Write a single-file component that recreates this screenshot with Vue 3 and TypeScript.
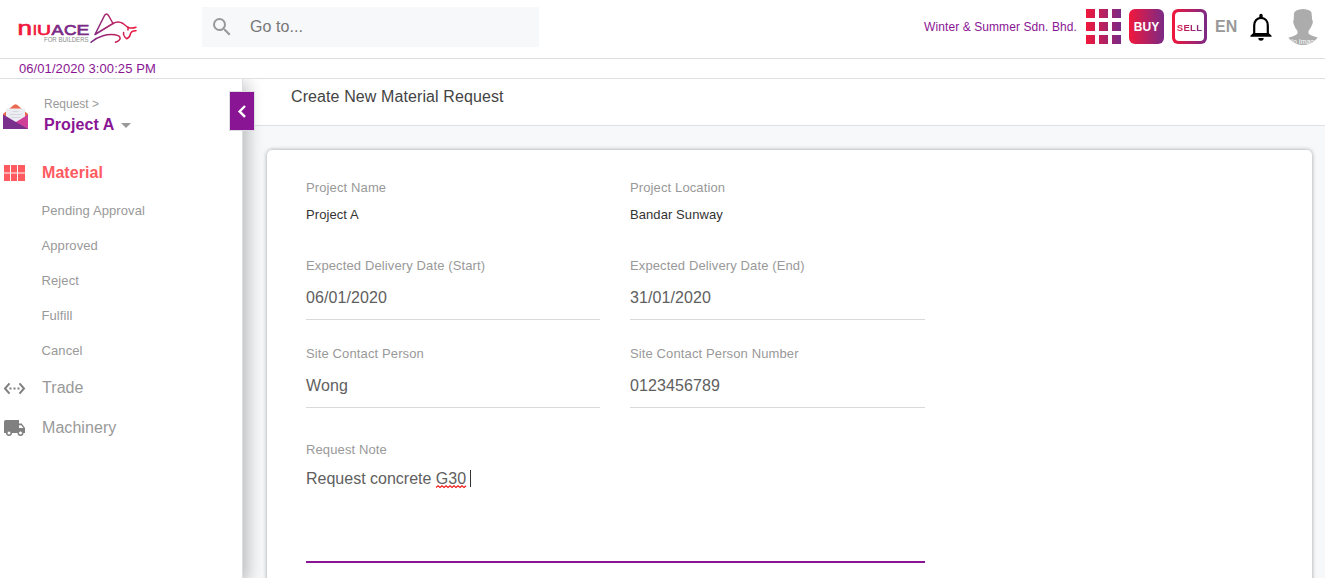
<script setup lang="ts">
import { ref } from 'vue'

interface Field {
  label: string
  value: string
  kind: 'static' | 'input'
}

const materialLinks: string[] = ['Pending Approval', 'Approved', 'Reject', 'Fulfill', 'Cancel']

const rows = ref<Field[][]>([
  [
    { label: 'Project Name', value: 'Project A', kind: 'static' },
    { label: 'Project Location', value: 'Bandar Sunway', kind: 'static' },
  ],
  [
    { label: 'Expected Delivery Date (Start)', value: '06/01/2020', kind: 'input' },
    { label: 'Expected Delivery Date (End)', value: '31/01/2020', kind: 'input' },
  ],
  [
    { label: 'Site Contact Person', value: 'Wong', kind: 'input' },
    { label: 'Site Contact Person Number', value: '0123456789', kind: 'input' },
  ],
])
</script>

<template>
  <div class="page">
    <header class="topbar">
      <svg class="logo" width="124" height="36" viewBox="0 0 124 36">
        <defs>
          <linearGradient id="bull" gradientUnits="userSpaceOnUse" x1="75" y1="0" x2="120" y2="0">
            <stop offset="0" stop-color="#7b2a86" />
            <stop offset="1" stop-color="#f0183c" />
          </linearGradient>
        </defs>
        <g class="wordmark">
          <text class="red small-n" x="1.6" y="25.4" textLength="14.5" lengthAdjust="spacingAndGlyphs">n</text>
          <text class="red" x="16.800" y="25.4">I</text>
          <text class="red" x="21" y="25.4" textLength="14" lengthAdjust="spacingAndGlyphs">U</text>
          <text class="purple" x="35.6" y="25.4" textLength="12" lengthAdjust="spacingAndGlyphs">A</text>
          <text class="purple" x="48" y="25.4" textLength="12.500" lengthAdjust="spacingAndGlyphs">C</text>
          <text class="purple" x="60.400" y="25.4" textLength="12.8" lengthAdjust="spacingAndGlyphs">E</text>
        </g>
        <text class="tagline" x="28" y="31.8" textLength="44.5" lengthAdjust="spacingAndGlyphs">FOR BUILDERS</text>
        <g fill="none" stroke="url(#bull)" stroke-width="1.5" stroke-linejoin="round" stroke-linecap="round">
          <path d="M79 24.5 L88.5 5.5 Q90.5 2.5 92.5 5.5 L97 13.5 L79 24.5Z" />
          <path d="M97 13.5 Q102 10.500 107 13.5 L112 17.500 Q116 18.8 120 17.2 M120 20.800 Q116 20.5 114.5 23.5 Q114 27.5 110.8 28.8 Q107 26 107.6 22.5" />
          <path d="M112 17 L112 20" />
          <path d="M75 32.3 C82 26 92 23.5 99 24.8 C106 26.2 105.5 30 99.5 32.2" />
        </g>
      </svg>
      <div class="search">
        <svg width="24" height="24" viewBox="0 0 24 24">
          <path fill="#999" d="M15.5 14h-.79l-.28-.27A6.47 6.47 0 0 0 16 9.5 6.5 6.5 0 1 0 9.500 16c1.610 0 3.090-.59 4.230-1.570l.27.28v.79l5 4.990L20.490 19l-4.990-5zm-6 0C7.010 14 5 11.990 5 9.500S7.010 5 9.500 5 14 7.010 14 9.500 11.990 14 9.500 14z" />
        </svg>
        <span>Go to...</span>
      </div>
      <div class="actions">
        <span class="company">Winter &amp; Summer Sdn. Bhd.</span>
        <svg class="apps" width="35" height="35" viewBox="0 0 35 35">
          <defs>
            <linearGradient id="brand" gradientUnits="userSpaceOnUse" x1="0" y1="0" x2="35" y2="0">
              <stop offset="0" stop-color="#f2173b" />
              <stop offset="1" stop-color="#7b2a86" />
            </linearGradient>
          </defs>
          <path fill="url(#brand)" d="M0 0h9v9H0zM13 0h9v9h-9zM26 0h9v9h-9zM0 13h9v9H0zM13 13h9v9h-9zM26 13h9v9h-9zM0 26h9v9H0zM13 26h9v9h-9zM26 26h9v9h-9z" />
        </svg>
        <span class="buy">BUY</span>
        <span class="sell"><span class="sell-inner"><span class="sell-text">SELL</span></span></span>
        <span class="lang">EN</span>
        <svg class="bell" width="24" height="28" viewBox="0 0 24 28">
          <path fill="none" stroke="#000" stroke-width="2.200" d="M5.200 22V12.500C5.200 8 8 4.800 12 4.800S18.800 8 18.800 12.500V22" />
          <path d="M10.300 2.500a1.700 1.700 0 0 1 3.400 0V5h-3.400zM1.400 22.800 4.300 20h15.400l2.900 2.800v1H1.400zM9.300 25h5.400a2.700 2.700 0 0 1-5.400 0z" />
        </svg>
        <svg class="avatar" width="36" height="36" viewBox="0 0 36 36">
          <defs>
            <clipPath id="round"><circle cx="18" cy="18" r="18" /></clipPath>
          </defs>
          <g clip-path="url(#round)">
            <path fill="#acacac" d="M9 4Q11 0 18 0Q25 0 26.500 3.500L27.200 11Q28.500 12 27.200 15.500Q25.500 20 23.500 22V24.500Q24.500 26.500 36 29.500V36H0V29.500Q11 27 12.500 24.500V22Q9.800 19 8.700 15Q7.500 12 8.700 11Z" />
            <text x="3" y="35" textLength="30" lengthAdjust="spacingAndGlyphs">No Image</text>
          </g>
        </svg>
      </div>
    </header>

    <div class="clock">06/01/2020 3:00:25 PM</div>

    <div class="body">
      <aside class="sidebar">
        <button class="collapse" aria-label="Collapse menu">
          <svg width="24" height="38" viewBox="0 0 24 38">
            <path fill="none" stroke="#fff" stroke-width="2.400" d="M15 14 9.600 19.400 15 24.800" />
          </svg>
        </button>
        <div class="project">
          <svg class="mail" width="26" height="26" viewBox="0 0 26 26">
            <path fill="#e96a50" d="M0 10 11 .8Q12.500-.3 14 .8L25 10v5H0z" />
            <path fill="#cf3f98" d="M25 10.500V25H0z" />
            <path fill="#ecedf2" d="M3 4.500h19v8L12.500 18.300 3 12.500z" />
            <path stroke="#d5d7df" d="M9.500 7.500h6M6.500 10.500h12M8 13.500h9" />
            <path fill="#7b2f8d" d="M0 10.500 25 25H0z" />
          </svg>
          <div>
            <div class="crumb">Request &gt;</div>
            <div class="project-name">Project A <i class="caret"></i></div>
          </div>
        </div>
        <nav>
          <div class="item active">
            <svg width="24" height="24" viewBox="0 0 24 24">
              <path fill="#ff5a5f" d="M2 4h6v7.500H2zM9 4h6v7.500H9zM16 4h7v7.500h-7zM2 12.500h6V20H2zM9 12.500h6V20H9zM16 12.500h7V20h-7z" />
            </svg>
            <span>Material</span>
          </div>
          <ul>
            <li v-for="link in materialLinks" :key="link">{{ link }}</li>
          </ul>
          <div class="item">
            <svg width="24" height="24" viewBox="0 0 24 24">
              <path fill="none" stroke="#808080" stroke-width="2" d="M7.500 7.300 3 12.500 7.500 17.700M17.500 7.300 22 12.500 17.500 17.700" />
              <path fill="#808080" d="M7.500 11.500h2v2h-2zM11.500 11.500h2v2h-2zM15.500 11.500h2v2h-2z" />
            </svg>
            <span>Trade</span>
          </div>
          <div class="item">
            <svg width="24" height="24" viewBox="0 0 24 24">
              <path fill="#808080" d="M19.700 7.500H17V4H3.800Q2 4 2 6V17h2a3 3 0 0 0 6 0h5.500a3 3 0 0 0 6 0H23V12zM19.200 9.200l2.200 2.800H17V9.200z" />
              <circle cx="7" cy="17" r="2" fill="#fff" stroke="#808080" />
              <circle cx="18.500" cy="17" r="2" fill="#fff" stroke="#808080" />
            </svg>
            <span>Machinery</span>
          </div>
        </nav>
      </aside>

      <main>
        <h1>Create New Material Request</h1>
        <section class="card">
          <div v-for="(row, i) in rows" :key="i" class="row" :class="row[0].kind">
            <div v-for="field in row" :key="field.label" class="field">
              <div class="label">{{ field.label }}</div>
              <div class="value">{{ field.value }}</div>
            </div>
          </div>
          <div class="note">
            <div class="label">Request Note</div>
            <div class="value">
              <span>Request concrete </span><span class="misspelt">G30<svg width="31" height="4" viewBox="0 0 31 4"><path fill="none" stroke="#f01818" stroke-width="1.200" d="M0 2.500 2 .8 4 2.500 6 .8 8 2.500 10 .8 12 2.500 14 .8 16 2.500 18 .8 20 2.500 22 .8 24 2.500 26 .8 28 2.500 30 .8" /></svg></span><i class="cursor"></i>
            </div>
          </div>
        </section>
      </main>
    </div>
  </div>
</template>

<style>
body {
  overflow: hidden;
}
</style>

<style scoped>
.page {
  width: 1325px;
  height: 578px;
  display: flex;
  flex-direction: column;
  overflow: hidden;
  background: #fff;
  color: #999;
  font-family: "Liberation Sans", Arial, sans-serif;
  font-size: 13px;
  white-space: nowrap;
}
.page * {
  box-sizing: border-box;
}
.page svg {
  display: block;
  flex: none;
}
.topbar {
  flex: none;
  height: 59px;
  border-bottom: 1px solid #dfe0e3;
  display: flex;
  align-items: flex-start;
}
.logo {
  margin: 10px 62px 0 16px;
}
.wordmark {
  font-size: 15.500px;
  stroke-width: 0.700px;
}
.small-n {
  font-size: 20px;
}
.red {
  fill: #f0183c;
  stroke: #f0183c;
}
.purple {
  fill: #7b2a86;
  stroke: #7b2a86;
}
.tagline {
  font-size: 6.300px;
  fill: #8c8c8c;
}
.search {
  margin-top: 7px;
  width: 337px;
  height: 40px;
  padding-left: 8px;
  background: #f6f8fa;
  display: flex;
  align-items: center;
  gap: 16px;
  font-size: 16px;
  letter-spacing: 0.060px;
  color: #777;
}
.actions {
  margin-left: auto;
  padding: 9px 4px 0 0;
  display: flex;
  align-items: flex-start;
}
.company {
  line-height: 36px;
  margin-right: 9px;
  font-size: 12px;
  letter-spacing: 0.090px;
  color: #8a1594;
}
.apps {
  margin-right: 8px;
}
.buy,
.sell {
  width: 35px;
  height: 35px;
  border-radius: 6px;
  background: linear-gradient(90deg, #f2173b, #7b2a86);
  font-weight: 700;
}
.buy {
  margin-right: 8px;
  color: #fff;
  font-size: 12px;
  line-height: 36px;
  text-align: center;
}
.sell {
  padding: 3px;
  margin-right: 8px;
}
.sell-inner {
  display: block;
  height: 29px;
  border-radius: 4px;
  background: #fff;
  text-align: center;
  line-height: 30px;
}
.sell-text {
  font-size: 9.500px;
  letter-spacing: 0.300px;
  color: transparent;
  background: linear-gradient(90deg, #e01c45, #7b2a86);
  background-clip: text;
}
.lang {
  width: 23px;
  margin-right: 11px;
  font-size: 16px;
  font-weight: 700;
  line-height: 35px;
}
.bell {
  margin: 4px 12px 0 0;
}
.avatar text {
  font-size: 8px;
  fill: #fff;
}
.clock {
  flex: none;
  height: 20px;
  border-bottom: 1px solid #dfe0e3;
  padding-left: 19px;
  line-height: 19px;
  font-size: 13px;
  letter-spacing: 0.080px;
  color: #8a1594;
}
.body {
  flex: 1;
  display: flex;
  min-height: 0;
}
.sidebar {
  position: relative;
  z-index: 1;
  flex: none;
  width: 243px;
  padding: 17px 0 0 3px;
  border-right: 1px solid #dcdee4;
  background: #fff;
  box-shadow: 4px 4px 16px rgba(0, 0, 0, 0.270);
  clip-path: inset(0 -40px 0 0);
}
.collapse {
  position: absolute;
  top: 12px;
  right: -13px;
  width: 26px;
  height: 40px;
  padding: 0;
  border: 1px solid #dcdee4;
  background: #8a1594;
}
.project {
  display: flex;
  gap: 15px;
  height: 57px;
}
.mail {
  margin-top: 8px;
}
.crumb {
  font-size: 12px;
  line-height: 16px;
}
.project-name {
  display: flex;
  align-items: center;
  gap: 7px;
  line-height: 25px;
  font-size: 16px;
  font-weight: 700;
  letter-spacing: 0.080px;
  color: #8a1594;
}
.caret {
  border: 5px solid transparent;
  border-bottom: 0;
  border-top-color: #999;
  margin-top: 2px;
}
.item {
  display: flex;
  align-items: center;
  gap: 16px;
  height: 40px;
  margin-left: -1px;
  font-size: 16px;
  letter-spacing: 0.060px;
}
.active {
  color: #ff5a5f;
  font-weight: 700;
}
ul {
  list-style: none;
  margin: 0;
  padding: 0 0 0 38.500px;
}
li {
  height: 35px;
  line-height: 36px;
  letter-spacing: 0.100px;
}
main {
  flex: 1;
  display: flex;
  flex-direction: column;
  background: #f6f8fa;
}
h1 {
  flex: none;
  margin: 0;
  height: 47px;
  padding-left: 48px;
  border-bottom: 1px solid #dfe0e3;
  background: #fff;
  line-height: 35px;
  font-size: 16px;
  font-weight: 400;
  letter-spacing: 0.100px;
  color: #444;
}
.card {
  flex: 1;
  margin: 24px 13px -10px 24px;
  padding: 28px 0 0 39px;
  border-radius: 5px;
  background: #fff;
  box-shadow: 0 0 4px rgba(0, 0, 0, 0.360);
}
.row {
  display: grid;
  grid-template-columns: 294px 295px;
  column-gap: 30px;
}
.label {
  height: 20px;
  line-height: 20px;
  letter-spacing: 0.120px;
}
.static {
  height: 78px;
}
.static .value {
  line-height: 34px;
  letter-spacing: 0.080px;
  color: #333;
}
.input {
  height: 88px;
}
.input .value {
  height: 44px;
  line-height: 43px;
  border-bottom: 1px solid #d9d9d9;
  font-size: 16px;
  letter-spacing: 0.100px;
  color: #606060;
}
.note {
  width: 619px;
  margin-top: 8px;
}
.note .value {
  height: 103px;
  border-bottom: 2px solid #8a1594;
  display: flex;
  line-height: 38px;
  font-size: 16px;
  color: #606060;
  white-space: pre;
}
.misspelt {
  position: relative;
}
.misspelt svg {
  position: absolute;
  left: 0;
  top: 25px;
}
.cursor {
  width: 1px;
  height: 17px;
  margin: 10px 0 0 4px;
  background: #333;
}
</style>
